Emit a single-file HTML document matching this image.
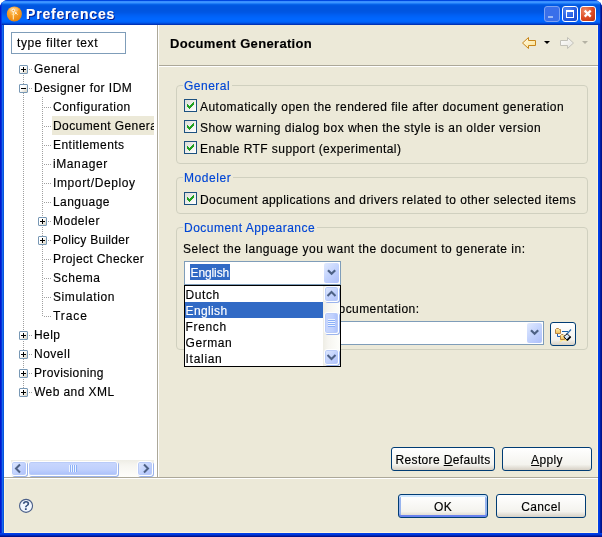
<!DOCTYPE html>
<html><head><meta charset="utf-8"><title>Preferences</title>
<style>
*{box-sizing:border-box;margin:0;padding:0}
html,body{width:602px;height:537px;overflow:hidden;background:#fff}
body{font-family:"Liberation Sans",sans-serif;font-size:12px;color:#000;position:relative;-webkit-text-stroke:.15px}
.abs{position:absolute}
#win{position:absolute;left:0;top:0;width:602px;height:537px;background:#0831d9;border-radius:8px 8px 0 0;overflow:hidden;will-change:transform}
#tbar{position:absolute;left:0;top:0;width:602px;height:25px;background:linear-gradient(to bottom,#0047e0 0px,#0047e0 1px,#3a8eff 1px,#3a8eff 2px,#3c94ff 2px,#3c94ff 3px,#1f7cf8 3px,#1f7cf8 4px,#0662e8 4px,#0662e8 5px,#0058e2 5px,#0058e2 6px,#0055e0 6px,#0055e0 7px,#0055e0 7px,#0055e0 8px,#0055e0 8px,#0055e0 9px,#0055e0 9px,#0055e0 10px,#0055e0 10px,#0055e0 11px,#0056e2 11px,#0056e2 12px,#0057e5 12px,#0057e5 13px,#005aea 13px,#005aea 14px,#005df0 14px,#005df0 15px,#0060f4 15px,#0060f4 16px,#0062f8 16px,#0062f8 17px,#0064fb 17px,#0064fb 18px,#0066fd 18px,#0066fd 19px,#0066ff 19px,#0066ff 20px,#0066ff 20px,#0066ff 21px,#0064fc 21px,#0064fc 22px,#005cf0 22px,#005cf0 23px,#0049d8 23px,#0049d8 24px,#0033b6 24px,#0033b6 25px)}
#ttl{position:absolute;left:26px;top:6px;font-weight:bold;font-size:14px;color:#fff;text-shadow:1px 1px 0 #0a1883;white-space:nowrap;line-height:16px;letter-spacing:0.812px}
#lb{position:absolute;left:0;top:25px;width:4px;height:512px;background:linear-gradient(to right,#0019cf 0,#0019cf 1px,#0831d9 1px,#0831d9 2px,#166aee 2px,#166aee 3px,#0855dd 3px)}
#rb{position:absolute;left:598px;top:25px;width:4px;height:512px;background:linear-gradient(to right,#003fe8 0,#003fe8 1px,#0038dd 1px,#0038dd 2px,#001fa4 2px,#001fa4 3px,#00138c 3px)}
#bb{position:absolute;left:0;top:533px;width:602px;height:4px;background:linear-gradient(to bottom,#003fe8 0,#003fe8 1px,#0038dd 1px,#0038dd 2px,#0026b4 2px,#0026b4 3px,#00138c 3px)}
#client{position:absolute;left:4px;top:25px;width:594px;height:508px;background:#ece9d8;border:1px solid #fdf4d8;border-top:0}
.wb{position:absolute;top:6px;width:16px;height:16px;border:1px solid #fff;border-radius:3px}
#bmin{left:544px;background:#3a6fea;border-color:#7da2f2;}
#bmax{left:562px;background:radial-gradient(circle at 30% 25%,#4f86f5 0%,#2359e0 60%,#1a48c8 100%)}
#bcls{left:580px;background:radial-gradient(circle at 30% 25%,#ee8a66 0%,#dc4a22 55%,#b5300f 100%)}
#left{position:absolute;left:4px;top:25px;width:153px;height:452px;background:#fff}
#filter{position:absolute;left:11px;top:32px;width:115px;height:22px;border:1px solid #7f9db9;background:#fff;line-height:20px;padding-left:5px;white-space:nowrap;letter-spacing:0.614px}
.tr{position:absolute;white-space:nowrap;line-height:19px;height:19px;letter-spacing:.35px}
.xb{position:absolute;width:9px;height:9px;border:1px solid #7898b5;border-radius:1px;background:linear-gradient(135deg,#fff 0%,#fff 40%,#d6d2c2 100%)}
.xb i.h{position:absolute;left:1px;top:3px;width:5px;height:1px;background:#000}
.xb i.v{position:absolute;left:3px;top:1px;width:1px;height:5px;background:#000}
.hd{position:absolute;height:1px;background:repeating-linear-gradient(to right,#a0a0a0 0,#a0a0a0 1px,transparent 1px,transparent 2px)}
.vd{position:absolute;width:1px;background:repeating-linear-gradient(to bottom,#a0a0a0 0,#a0a0a0 1px,transparent 1px,transparent 2px)}
.t{position:absolute;white-space:nowrap;line-height:15px;height:15px;letter-spacing:.35px;margin-top:1px}
.grp{position:absolute;border:1px solid #d0d0bf;border-radius:4px}
.gl{position:absolute;color:#0046d5;background:#ece9d8;white-space:nowrap;line-height:15px;padding:0 2px 0 1px;letter-spacing:.35px}
.cb{position:absolute;width:13px;height:13px;border:1px solid #1c5180;background:linear-gradient(135deg,#dcdcd7,#fff)}
.cb svg{position:absolute;left:0;top:0}
.btn{position:absolute;border:1px solid #003c74;border-radius:3px;background:linear-gradient(to bottom,#fff 0%,#f4f3ee 75%,#d6d0c5 100%);text-align:center;line-height:25px;white-space:nowrap;letter-spacing:.35px}
.combo{position:absolute;border:1px solid #7f9db9;background:#fff}
.cbtn{position:absolute;border:0 solid #b7c7f5;border-radius:2px;background:linear-gradient(135deg,#e1eafe 0%,#c3d3fd 50%,#aebffa 100%)}
.sbtn{position:absolute;width:16px;height:16px;border:1px solid #fff;border-radius:3px;background:linear-gradient(135deg,#e1eafe 0%,#c3d3fd 50%,#aebffa 100%);box-shadow:inset 0 0 0 1px #b9cbf8,1px 1px 0 #9cb4ec}
u{text-decoration:underline}
</style></head><body>
<div id="win">
<div id="tbar"></div>
<svg class="abs" style="left:6px;top:6px" width="17" height="16" viewBox="0 0 17 16"><defs><radialGradient id="og" cx="42%" cy="28%" r="72%"><stop offset="0" stop-color="#ffcf80"/><stop offset=".45" stop-color="#f8a02a"/><stop offset="1" stop-color="#e8850c"/></radialGradient></defs><circle cx="8.35" cy="7.95" r="7.55" fill="url(#og)"/><ellipse cx="8" cy="3.6" rx="4.6" ry="2.2" fill="#fff" opacity=".22"/><path d="M7.3 5.6 L7.3 13.5" stroke="#fff2c8" stroke-width="1"/><path d="M8.1 5.3 L9.8 7 L11.8 9" stroke="#ffe9b0" stroke-width=".8" fill="none"/><path d="M5.8 8.6 L8.8 8.6" stroke="#ffdf98" stroke-width=".8"/><circle cx="7.3" cy="4.4" r="1.25" fill="#f8a02a" stroke="#fff" stroke-width=".9"/><circle cx="9.9" cy="7.1" r=".9" fill="#fff"/></svg>
<div id="ttl">Preferences</div>
<div class="wb" id="bmin"><div class="abs" style="left:3px;top:9px;width:5px;height:2px;background:#9db9f5"></div></div>
<div class="wb" id="bmax"><div class="abs" style="left:3px;top:3px;width:9px;height:8px;border:1px solid #fff;border-top-width:2px;width:8px"></div></div>
<div class="wb" id="bcls"><svg class="abs" style="left:0;top:0" width="14" height="14" viewBox="0 0 14 14"><path d="M3.7 3.6 L9.7 9.6 M9.7 3.6 L3.7 9.6" stroke="#fff" stroke-width="2.2"/></svg></div>
<div class="abs" style="left:0;top:5px;width:1px;height:20px;background:#0019cf"></div><div class="abs" style="left:1px;top:3px;width:1px;height:22px;background:#0837d8;opacity:.8"></div><div class="abs" style="left:601px;top:5px;width:1px;height:20px;background:#00138c"></div><div class="abs" style="left:600px;top:3px;width:1px;height:22px;background:#001fa4;opacity:.8"></div><div id="lb"></div><div id="rb"></div><div id="bb"></div>
<div id="client"></div>
<!-- left panel -->
<div id="left"></div>
<div class="abs" style="left:157px;top:25px;width:1px;height:452px;background:#aca899"></div>
<div class="abs" style="left:158px;top:25px;width:1px;height:452px;background:#fff"></div>
<div id="filter">type filter text</div>
<div class="vd" style="left:23px;top:75px;height:313px"></div>
<div class="vd" style="left:42px;top:97px;height:220px"></div>
<div class="tr" style="left:34px;top:60px;letter-spacing:0.442px">General</div>
<div class="xb" style="left:19px;top:65px"><i class="h"></i><i class="v"></i></div>
<div class="hd" style="left:29px;top:69px;width:4px"></div>
<div class="tr" style="left:34px;top:79px;letter-spacing:0.475px">Designer for IDM</div>
<div class="xb" style="left:19px;top:84px"><i class="h"></i></div>
<div class="hd" style="left:29px;top:88px;width:4px"></div>
<div class="tr" style="left:53px;top:98px;letter-spacing:0.493px">Configuration</div>
<div class="hd" style="left:44px;top:107px;width:8px"></div>
<div class="abs" style="left:52px;top:116px;width:102px;height:19px;background:#ece9d8"></div>
<div class="tr" style="left:53px;top:117px;width:101px;overflow:hidden;letter-spacing:0.416px">Document Genera</div>
<div class="hd" style="left:44px;top:126px;width:8px"></div>
<div class="tr" style="left:53px;top:136px;letter-spacing:0.456px">Entitlements</div>
<div class="hd" style="left:44px;top:145px;width:8px"></div>
<div class="tr" style="left:53px;top:155px;letter-spacing:0.596px">iManager</div>
<div class="hd" style="left:44px;top:164px;width:8px"></div>
<div class="tr" style="left:53px;top:174px;letter-spacing:0.615px">Import/Deploy</div>
<div class="hd" style="left:44px;top:183px;width:8px"></div>
<div class="tr" style="left:53px;top:193px;letter-spacing:0.451px">Language</div>
<div class="hd" style="left:44px;top:202px;width:8px"></div>
<div class="tr" style="left:53px;top:212px;letter-spacing:0.506px">Modeler</div>
<div class="xb" style="left:38px;top:217px"><i class="h"></i><i class="v"></i></div>
<div class="hd" style="left:48px;top:221px;width:4px"></div>
<div class="tr" style="left:53px;top:231px;letter-spacing:0.264px">Policy Builder</div>
<div class="xb" style="left:38px;top:236px"><i class="h"></i><i class="v"></i></div>
<div class="hd" style="left:48px;top:240px;width:4px"></div>
<div class="tr" style="left:53px;top:250px;letter-spacing:0.388px">Project Checker</div>
<div class="hd" style="left:44px;top:259px;width:8px"></div>
<div class="tr" style="left:53px;top:269px;letter-spacing:0.595px">Schema</div>
<div class="hd" style="left:44px;top:278px;width:8px"></div>
<div class="tr" style="left:53px;top:288px;letter-spacing:0.597px">Simulation</div>
<div class="hd" style="left:44px;top:297px;width:8px"></div>
<div class="tr" style="left:53px;top:307px;letter-spacing:0.913px">Trace</div>
<div class="hd" style="left:44px;top:316px;width:8px"></div>
<div class="tr" style="left:34px;top:326px;letter-spacing:0.453px">Help</div>
<div class="xb" style="left:19px;top:331px"><i class="h"></i><i class="v"></i></div>
<div class="hd" style="left:29px;top:335px;width:4px"></div>
<div class="tr" style="left:34px;top:345px;letter-spacing:0.49px">Novell</div>
<div class="xb" style="left:19px;top:350px"><i class="h"></i><i class="v"></i></div>
<div class="hd" style="left:29px;top:354px;width:4px"></div>
<div class="tr" style="left:34px;top:364px;letter-spacing:0.369px">Provisioning</div>
<div class="xb" style="left:19px;top:369px"><i class="h"></i><i class="v"></i></div>
<div class="hd" style="left:29px;top:373px;width:4px"></div>
<div class="tr" style="left:34px;top:383px;letter-spacing:0.425px">Web and XML</div>
<div class="xb" style="left:19px;top:388px"><i class="h"></i><i class="v"></i></div>
<div class="hd" style="left:29px;top:392px;width:4px"></div>
<!-- h scrollbar -->
<div class="abs" style="left:11px;top:460px;width:143px;height:17px;background:linear-gradient(to bottom,#eeede5 0%,#f6f5f0 30%,#fefefb 100%)"></div>
<div class="sbtn" style="left:11px;top:461px;height:15px"><svg class="abs" style="left:0;top:0" width="14" height="13" viewBox="0 0 14 13"><path d="M8 2.5 L4 6.5 L8 10.5" fill="none" stroke="#4d6185" stroke-width="2"/></svg></div>
<div class="sbtn" style="left:137px;top:461px;height:15px"><svg class="abs" style="left:0;top:0" width="14" height="13" viewBox="0 0 14 13"><path d="M6 2.5 L10 6.5 L6 10.5" fill="none" stroke="#4d6185" stroke-width="2"/></svg></div>
<div class="sbtn" style="left:28px;top:461px;height:15px;width:90px;background:linear-gradient(to bottom,#c9d7fd 0%,#bfd0fd 60%,#aabffa 100%)"><div class="abs" style="left:40px;top:3px;width:8px;height:7px;background:repeating-linear-gradient(to right,#eef4fe 0,#eef4fe 1px,#8cb0f8 1px,#8cb0f8 2px)"></div></div>
<!-- right panel -->
<div class="t" style="left:170px;top:35px;font-weight:bold;font-size:13px;letter-spacing:0.332px">Document Generation</div>
<div class="abs" style="left:159px;top:65px;width:439px;height:1px;background:#aca899"></div>
<div class="abs" style="left:159px;top:66px;width:439px;height:1px;background:#fff"></div>
<!-- nav arrows -->
<svg class="abs" style="left:520px;top:35px" width="72" height="16" viewBox="0 0 72 16">
<defs><linearGradient id="ga" x1="0" y1="0" x2="1" y2="1"><stop offset="0" stop-color="#fffdf0"/><stop offset="1" stop-color="#fbe08a"/></linearGradient>
<linearGradient id="gb" x1="0" y1="0" x2="1" y2="1"><stop offset="0" stop-color="#ffffff"/><stop offset="1" stop-color="#e4e3dc"/></linearGradient></defs>
<path d="M2.5 8 L8.5 2.5 L8.5 5.5 L15.5 5.5 L15.5 10.5 L8.5 10.5 L8.5 13.5 Z" fill="url(#ga)" stroke="#c8861a" stroke-width="1"/>
<path d="M24 6 L30 6 L27 9 Z" fill="#000"/>
<path d="M53.5 8 L47.5 2.5 L47.5 5.5 L40.5 5.5 L40.5 10.5 L47.5 10.5 L47.5 13.5 Z" fill="url(#gb)" stroke="#c2c1b8" stroke-width="1"/>
<path d="M62 6 L68 6 L65 9 Z" fill="#b4b2a4"/>
</svg>
<!-- group 1 -->
<div class="grp" style="left:176px;top:85px;width:412px;height:79px"></div>
<div class="gl" style="left:183px;top:79px;letter-spacing:0.492px">General</div>
<div class="cb" style="left:184px;top:99px"><svg width="11" height="11" viewBox="0 0 11 11" shape-rendering="crispEdges"><path d="M2 4h1v3h-1zM3 5h1v3h-1zM4 6h1v3h-1zM5 5h1v3h-1zM6 4h1v3h-1zM7 3h1v3h-1zM8 2h1v3h-1z" fill="#21a121"/></svg></div><div class="t" style="left:200px;top:99px;letter-spacing:0.471px">Automatically open the rendered file after document generation</div>
<div class="cb" style="left:184px;top:120px"><svg width="11" height="11" viewBox="0 0 11 11" shape-rendering="crispEdges"><path d="M2 4h1v3h-1zM3 5h1v3h-1zM4 6h1v3h-1zM5 5h1v3h-1zM6 4h1v3h-1zM7 3h1v3h-1zM8 2h1v3h-1z" fill="#21a121"/></svg></div><div class="t" style="left:200px;top:120px;letter-spacing:0.464px">Show warning dialog box when the style is an older version</div>
<div class="cb" style="left:184px;top:141px"><svg width="11" height="11" viewBox="0 0 11 11" shape-rendering="crispEdges"><path d="M2 4h1v3h-1zM3 5h1v3h-1zM4 6h1v3h-1zM5 5h1v3h-1zM6 4h1v3h-1zM7 3h1v3h-1zM8 2h1v3h-1z" fill="#21a121"/></svg></div><div class="t" style="left:200px;top:141px;letter-spacing:0.43px">Enable RTF support (experimental)</div>
<!-- group 2 -->
<div class="grp" style="left:176px;top:177px;width:412px;height:37px"></div>
<div class="gl" style="left:183px;top:171px;letter-spacing:0.549px">Modeler</div>
<div class="cb" style="left:184px;top:192px"><svg width="11" height="11" viewBox="0 0 11 11" shape-rendering="crispEdges"><path d="M2 4h1v3h-1zM3 5h1v3h-1zM4 6h1v3h-1zM5 5h1v3h-1zM6 4h1v3h-1zM7 3h1v3h-1zM8 2h1v3h-1z" fill="#21a121"/></svg></div><div class="t" style="left:200px;top:192px;letter-spacing:0.431px">Document applications and drivers related to other selected items</div>
<!-- group 3 -->
<div class="grp" style="left:176px;top:227px;width:412px;height:123px"></div>
<div class="gl" style="left:183px;top:221px;letter-spacing:0.477px">Document Appearance</div>
<div class="t" style="left:183px;top:241px;letter-spacing:0.508px">Select the language you want the document to generate in:</div>
<div class="combo" style="left:184px;top:261px;width:157px;height:24px"></div>
<div class="abs" style="left:190px;top:264px;width:40px;height:16px;overflow:hidden;background:#316ac5;color:#fff;line-height:18px;white-space:nowrap;padding-left:.5px;letter-spacing:-0.108px">English</div>
<div class="cbtn" style="left:324px;top:263px;width:15px;height:20px"><svg class="abs" style="left:0;top:0" width="15" height="20" viewBox="0 0 15 20"><path d="M4 7.2 L7.6 10.8 L11.2 7.2" fill="none" stroke="#4d6185" stroke-width="2.2"/></svg></div>
<div class="t" style="right:182.6px;top:301px;letter-spacing:.42px">Select the style used for documentation:</div>
<div class="combo" style="left:184px;top:321px;width:360px;height:24px"></div>
<div class="cbtn" style="left:527px;top:323px;width:15px;height:20px"><svg class="abs" style="left:0;top:0" width="15" height="20" viewBox="0 0 15 20"><path d="M4 7.2 L7.6 10.8 L11.2 7.2" fill="none" stroke="#4d6185" stroke-width="2.2"/></svg></div>
<div class="btn" style="left:550px;top:322px;width:26px;height:24px"><svg class="abs" style="left:-1px;top:-1px" width="26" height="24" viewBox="0 0 26 24"><defs><linearGradient id="fo" x1="0" y1="0" x2="0" y2="1"><stop offset="0" stop-color="#fff0b0"/><stop offset="1" stop-color="#f4bf58"/></linearGradient><linearGradient id="br" x1="0" y1="0" x2="1" y2="1"><stop offset="0" stop-color="#ffffff"/><stop offset="1" stop-color="#a9c4ea"/></linearGradient></defs><path d="M9 20.5 L12 16 L15.5 17 L19 15 L17 19.5 L13.5 18.5 Z" fill="#ffe57a" opacity=".85"/><path d="M7.5 11 L7.5 14.5 L10.5 14.5" fill="none" stroke="#1a5cb8" stroke-width="1"/><path d="M12 9.5 L18 9.5" stroke="#1a5ea8" stroke-width="1"/><path d="M5.5 7.5 L6.5 6.5 L8.5 6.5 L9.5 7.5 L10.5 7.5 L10.5 11.5 L5.5 11.5 Z" fill="url(#fo)" stroke="#b98542" stroke-width="1"/><path d="M10.5 13.5 L11.5 12.5 L13 12.5 L14 13.5 L14.5 13.5 L14.5 17.5 L10.5 17.5 Z" fill="url(#fo)" stroke="#b98542" stroke-width="1"/><path d="M21 7.5 L16.5 12.5" stroke="#2a6cb0" stroke-width="1.2"/><path d="M13.8 14.6 L17.2 11.8 L20.2 14.8 L17 18.2 Z" fill="url(#br)" stroke="#10151c" stroke-width="1"/><path d="M17 18.4 L20.6 14.6" stroke="#000" stroke-width="1.6"/></svg></div>
<!-- dropdown list -->
<div class="abs" style="left:184px;top:285px;width:157px;height:82px;border:1px solid #000;background:#fff"></div>
<div class="abs" style="left:185px;top:302px;width:138px;height:16px;background:#316ac5"></div>
<div class="t li" style="left:185.6px;top:286px;line-height:16px;height:16px;letter-spacing:0.548px">Dutch</div>
<div class="t li" style="left:185.6px;top:302px;line-height:16px;height:16px;color:#fff;letter-spacing:0.363px">English</div>
<div class="t li" style="left:185.6px;top:318px;line-height:16px;height:16px;letter-spacing:0.623px">French</div>
<div class="t li" style="left:185.6px;top:334px;line-height:16px;height:16px;letter-spacing:0.54px">German</div>
<div class="t li" style="left:185.6px;top:350px;line-height:16px;height:16px;letter-spacing:0.696px">Italian</div>
<div class="abs" style="left:323px;top:286px;width:17px;height:80px;background:linear-gradient(to right,#eeede5 0%,#f6f5f0 30%,#fefefb 100%)"></div>
<div class="sbtn" style="left:324px;top:286px;width:15px"><svg class="abs" style="left:0;top:0" width="13" height="14" viewBox="0 0 13 14"><path d="M2.5 9 L6.5 5 L10.5 9" fill="none" stroke="#4d6185" stroke-width="2"/></svg></div>
<div class="sbtn" style="left:324px;top:349px;width:15px"><svg class="abs" style="left:0;top:0" width="13" height="14" viewBox="0 0 13 14"><path d="M2.5 5 L6.5 9 L10.5 5" fill="none" stroke="#4d6185" stroke-width="2"/></svg></div>
<div class="sbtn" style="left:324px;top:312px;width:15px;height:22px;background:linear-gradient(to right,#c9d7fd 0%,#bfd0fd 60%,#aabffa 100%)"><div class="abs" style="left:3px;top:6px;width:7px;height:8px;background:repeating-linear-gradient(to bottom,#eef4fe 0,#eef4fe 1px,#8cb0f8 1px,#8cb0f8 2px)"></div></div>
<!-- buttons -->
<div class="btn" style="left:391px;top:447px;width:104px;height:24px">Restore <u>D</u>efaults</div>
<div class="btn" style="left:502px;top:447px;width:90px;height:24px"><u>A</u>pply</div>
<div class="abs" style="left:4px;top:477px;width:594px;height:1px;background:#aca899"></div>
<div class="abs" style="left:4px;top:478px;width:594px;height:1px;background:#fff"></div>
<div class="btn" style="left:398px;top:494px;width:90px;height:24px;box-shadow:inset 0 2px 0 #cee7ff,inset 0 -2px 0 #6982ee,inset 2px 0 0 #98b4ee,inset -2px 0 0 #98b4ee">OK</div>
<div class="btn" style="left:496px;top:494px;width:90px;height:24px">Cancel</div>
<!-- help -->
<svg class="abs" style="left:18px;top:498px" width="16" height="16" viewBox="0 0 16 16"><circle cx="8.05" cy="7.85" r="6.5" fill="#f1f6fd" stroke="#4a5f88" stroke-width="1.1"/><text x="8" y="12.3" text-anchor="middle" font-family="Liberation Sans, sans-serif" font-weight="bold" font-size="12.5" fill="#35507e">?</text></svg>
</div>
</body></html>
